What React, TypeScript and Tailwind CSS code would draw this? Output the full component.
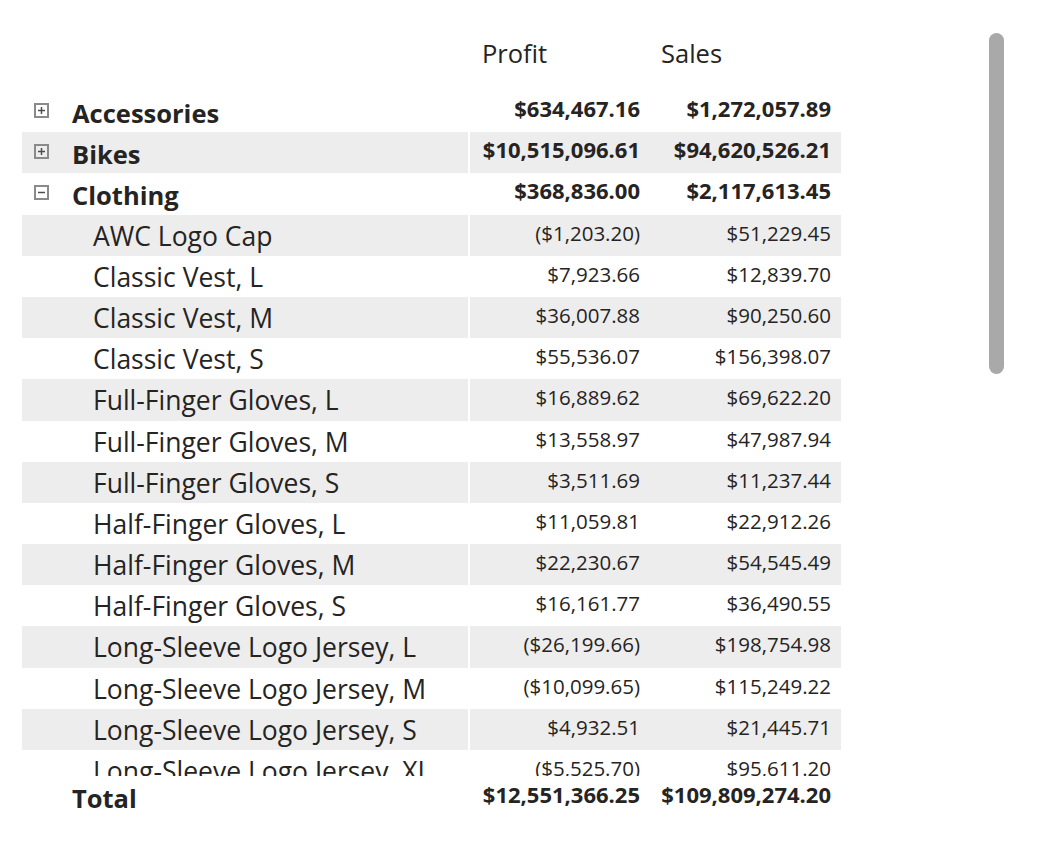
import React from 'react';

type Row = { label: string; profit: string; sales: string; level: 0 | 1; expanded?: boolean };

const rows: Row[] = [
  { label: 'Accessories', profit: '$634,467.16', sales: '$1,272,057.89', level: 0, expanded: false },
  { label: 'Bikes', profit: '$10,515,096.61', sales: '$94,620,526.21', level: 0, expanded: false },
  { label: 'Clothing', profit: '$368,836.00', sales: '$2,117,613.45', level: 0, expanded: true },
  { label: 'AWC Logo Cap', profit: '($1,203.20)', sales: '$51,229.45', level: 1 },
  { label: 'Classic Vest, L', profit: '$7,923.66', sales: '$12,839.70', level: 1 },
  { label: 'Classic Vest, M', profit: '$36,007.88', sales: '$90,250.60', level: 1 },
  { label: 'Classic Vest, S', profit: '$55,536.07', sales: '$156,398.07', level: 1 },
  { label: 'Full-Finger Gloves, L', profit: '$16,889.62', sales: '$69,622.20', level: 1 },
  { label: 'Full-Finger Gloves, M', profit: '$13,558.97', sales: '$47,987.94', level: 1 },
  { label: 'Full-Finger Gloves, S', profit: '$3,511.69', sales: '$11,237.44', level: 1 },
  { label: 'Half-Finger Gloves, L', profit: '$11,059.81', sales: '$22,912.26', level: 1 },
  { label: 'Half-Finger Gloves, M', profit: '$22,230.67', sales: '$54,545.49', level: 1 },
  { label: 'Half-Finger Gloves, S', profit: '$16,161.77', sales: '$36,490.55', level: 1 },
  { label: 'Long-Sleeve Logo Jersey, L', profit: '($26,199.66)', sales: '$198,754.98', level: 1 },
  { label: 'Long-Sleeve Logo Jersey, M', profit: '($10,099.65)', sales: '$115,249.22', level: 1 },
  { label: 'Long-Sleeve Logo Jersey, S', profit: '$4,932.51', sales: '$21,445.71', level: 1 },
  { label: 'Long-Sleeve Logo Jersey, XL', profit: '($5,525.70)', sales: '$95,611.20', level: 1 },
];

function ExpandIcon({ expanded }: { expanded?: boolean }) {
  return (
    <svg width="15" height="15" viewBox="0 0 15 15" className="shrink-0">
      <rect x="1" y="1" width="13" height="13" fill="none" stroke="#8a8a8a" strokeWidth="2" />
      <line x1="4" y1="7.5" x2="11" y2="7.5" stroke="#4f4f4f" strokeWidth="1.5" />
      {!expanded && <line x1="7.5" y1="4" x2="7.5" y2="11" stroke="#4f4f4f" strokeWidth="1.5" />}
    </svg>
  );
}

export default function App() {
  const font = { fontFamily: '"Open Sans", "Noto Sans", sans-serif' };

  return (
    <div className="relative w-[1040px] h-[848px] bg-white text-[#252423]" style={font}>
      <div className="pl-[22px] pt-[32px]">
        {/* Column headers */}
        <div className="flex h-[59px]">
          <div className="w-[446px]" />
          <div className="w-[2px]" />
          <div className="w-[180px] pl-[12px] pt-[4px] text-[25.5px] leading-[34px]">Profit</div>
          <div className="w-[191px] pl-[11px] pt-[4px] text-[25.5px] leading-[34px]">Sales</div>
        </div>

        {/* Body */}
        <div className="h-[685px] overflow-hidden">
          {rows.map((r, i) => {
            const band = i % 2 === 1 ? 'bg-[#eeeded]' : 'bg-white';
            const valueCls =
              r.level === 0
                ? 'pt-[2px] text-[22px] leading-[30px] font-bold'
                : 'pt-[4px] text-[20.5px] leading-[28px]';
            return (
              <div key={r.label} className="flex h-[41.2px]">
                <div className={`w-[446px] ${band} flex items-start`}>
                  {r.level === 0 ? (
                    <>
                      <div className="w-[50px] pl-[12px] pt-[12px]">
                        <ExpandIcon expanded={r.expanded} />
                      </div>
                      <span className="pt-[5px] text-[25.5px] leading-[34px] font-bold whitespace-nowrap">
                        {r.label}
                      </span>
                    </>
                  ) : (
                    <span className="pl-[71px] pt-[3px] text-[26.5px] leading-[36px] whitespace-nowrap">
                      {r.label}
                    </span>
                  )}
                </div>
                <div className="w-[2px] bg-white" />
                <div className={`w-[180px] ${band} pr-[10px] text-right whitespace-nowrap ${valueCls}`}>
                  {r.profit}
                </div>
                <div className={`w-[191px] ${band} pr-[10px] text-right whitespace-nowrap ${valueCls}`}>
                  {r.sales}
                </div>
              </div>
            );
          })}
        </div>

        {/* Total */}
        <div className="flex h-[44px]">
          <div className="w-[446px] pl-[50px] pt-[5px] text-[25.5px] leading-[34px] font-bold">Total</div>
          <div className="w-[2px]" />
          <div className="w-[180px] pr-[10px] pt-[2.5px] text-right text-[22px] leading-[30px] font-bold whitespace-nowrap">
            $12,551,366.25
          </div>
          <div className="w-[191px] pr-[10px] pt-[2.5px] text-right text-[22px] leading-[30px] font-bold whitespace-nowrap">
            $109,809,274.20
          </div>
        </div>
      </div>

      {/* Scrollbar thumb */}
      <div className="absolute left-[989px] top-[33px] w-[15px] h-[341px] rounded-full bg-[#a9a9a9]" />
    </div>
  );
}
